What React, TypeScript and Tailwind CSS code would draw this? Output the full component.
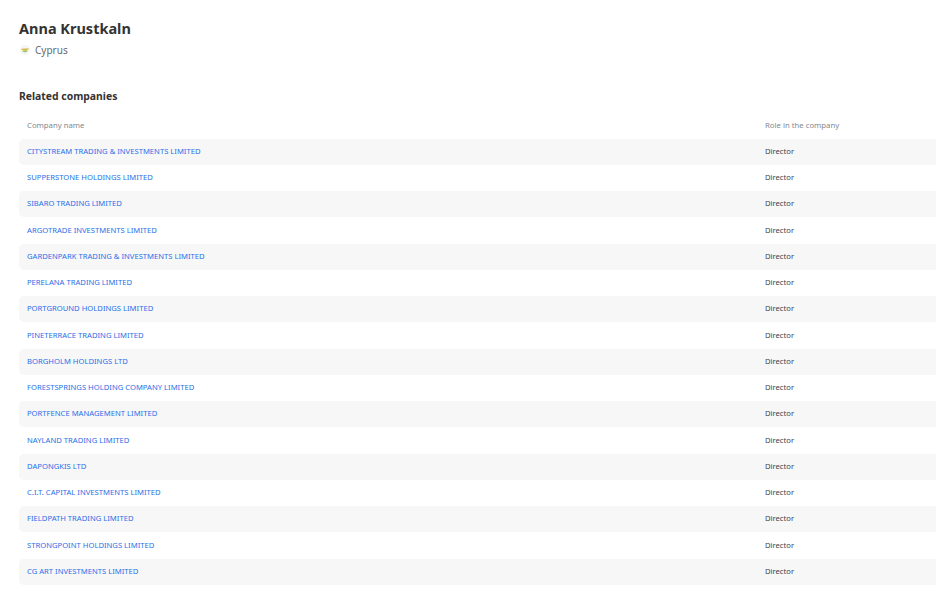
const companies = [
  "CITYSTREAM TRADING & INVESTMENTS LIMITED",
  "SUPPERSTONE HOLDINGS LIMITED",
  "SIBARO TRADING LIMITED",
  "ARGOTRADE INVESTMENTS LIMITED",
  "GARDENPARK TRADING & INVESTMENTS LIMITED",
  "PERELANA TRADING LIMITED",
  "PORTGROUND HOLDINGS LIMITED",
  "PINETERRACE TRADING LIMITED",
  "BORGHOLM HOLDINGS LTD",
  "FORESTSPRINGS HOLDING COMPANY LIMITED",
  "PORTFENCE MANAGEMENT LIMITED",
  "NAYLAND TRADING LIMITED",
  "DAPONGKIS LTD",
  "C.I.T. CAPITAL INVESTMENTS LIMITED",
  "FIELDPATH TRADING LIMITED",
  "STRONGPOINT HOLDINGS LIMITED",
  "CG ART INVESTMENTS LIMITED",
];

function CyprusFlag() {
  return (
    <svg width="10" height="10" viewBox="0 0 10 10" className="shrink-0">
      <circle cx="5" cy="5" r="5" fill="#f4f6f2" />
      <path d="M1 3.8 L8.8 3.2 C8.2 5.4 6.4 6 5 6 C3.4 6 2 5.4 1 3.8 Z" fill="#d3c04a" />
      <path d="M2.4 5.8 C4 7.8 6 7.8 7.6 5.8 C6 6.6 4 6.6 2.4 5.8 Z" fill="#5f9e3f" />
    </svg>
  );
}

export default function App() {
  return (
    <div className="h-[604px] w-[936px] overflow-hidden bg-white pl-[19px] font-['Noto_Sans',sans-serif]">
      <h1 className="pt-[18px] text-[14.5px] leading-5 font-bold text-[#333333]">Anna Krustkaln</h1>
      <div className="mt-[4px] flex h-4 items-center gap-[5px] pl-[1px] text-[10px] text-[#666a70]">
        <CyprusFlag />
        <span>Cyprus</span>
      </div>

      <h2 className="mt-[30px] text-[10.4px] leading-4 font-bold text-[#333333]">Related companies</h2>

      <div className="mt-[10px] flex h-[24.5px] items-center px-2 text-[7.75px] text-[#84898f]">
        <div className="w-[738px]">Company name</div>
        <div>Role in the company</div>
      </div>

      <div className="flex flex-col">
        {companies.map((name) => (
          <div
            key={name}
            className="flex h-[26.25px] items-center rounded-l-[5px] px-2 text-[7.65px] odd:bg-[#f7f7f8]"
          >
            <a className="w-[738px] text-[#2a6fe8]">{name}</a>
            <div className="text-[#444444]">Director</div>
          </div>
        ))}
      </div>
    </div>
  );
}
